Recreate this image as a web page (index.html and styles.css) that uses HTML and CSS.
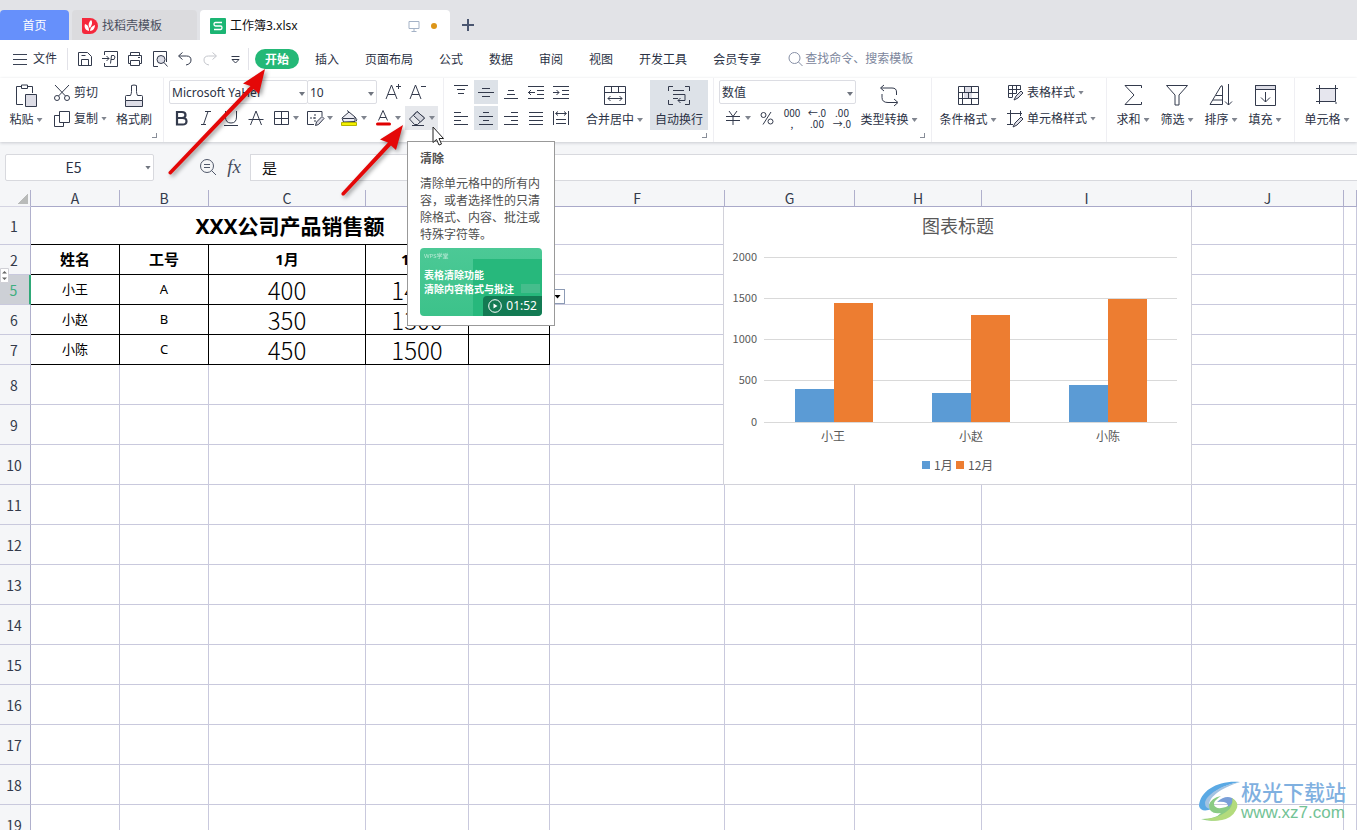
FILE: index.html
```html
<!DOCTYPE html>
<html lang="zh-CN">
<head>
<meta charset="utf-8">
<title>工作簿3.xlsx</title>
<link rel="stylesheet" href="styles.css">
</head>
<body>
<header class="tabbar">
  <button class="tab home">首页</button>
  <button class="tab docer"><svg class="logo" viewBox="0 0 16 16"><path d="M0 0h8a8 8 0 0 1 8 8 8 8 0 0 1-8 8H3a3 3 0 0 1-3-3z" fill="#f5283c"/><path d="M7 13C3 12 2 9 3 6c3 1 4 3 4 7zM7 9c-1-3 0-5 2-7 2 2 1 5-1 8zM8 13c0-3 2-5 5-6 0 3-2 6-5 6z" fill="#fff"/></svg>找稻壳模板</button>
  <div class="tab active"><svg class="logo" viewBox="0 0 16 16"><rect width="16" height="16" rx="1" fill="#1bb573"/><path d="M12 4.500H5.500q-1.500 0-1.500 1.700T5.500 8h5q1.500 0 1.500 1.700T10.500 11.500H4" fill="none" stroke="#fff" stroke-width="1.300"/></svg><span class="name">工作簿3.xlsx</span>
    <svg class="screen" viewBox="0 0 12 12" fill="none" stroke="#a4b2c6"><path d="M1 1.500h10v7H1zM6 8.500v3M3.500 11.500h5"/></svg><i class="dot"></i></div>
  <button class="plus" aria-label="新建"><svg width="12" height="12" stroke="#4a5670" stroke-width="2"><path d="M6 0v12M0 6h12"/></svg></button>
</header>

<nav class="menubar">
  <button class="file"><svg width="16" height="12" stroke="#3a4254"><path d="M1 1.500h14M1 6.500h14M1 11.500h14"/></svg>文件</button>
  <div class="quick">
    <button aria-label="保存"><svg class="ic16" viewBox="0 0 16 16"><path d="M1.500 1.500h9l4 4v9h-13zM4.500 14.500v-6h7v6M4.500 4.500h4"/></svg></button>
    <button aria-label="输出为PDF"><svg class="ic16" viewBox="0 0 16 16"><path d="M2.500 4V.5h13v15h-13V12M0 7.500h7M4.500 5l2.500 2.500L4.500 10M8.500 12.500l1-8h2.500q2 1 0 4H9"/></svg></button>
    <button aria-label="打印"><svg class="ic16" viewBox="0 0 16 16"><path d="M3.500 4.500v-3h9v3M3.500 12.500h-2v-8h13v8h-2M3.500 9.500h9v5h-9zM11 6.500h2"/></svg></button>
    <button aria-label="打印预览"><svg class="ic16" viewBox="0 0 16 16"><path d="M6 15.500H1.500V.5h13V11"/><circle cx="9" cy="8.500" r="4" fill="#dcdde6"/><path d="M12 11.500l3.500 4"/></svg></button>
    <button aria-label="撤销"><svg class="ic16" viewBox="0 0 16 16"><path d="M5.500 1.500l-4 3.500 4 3.500M2 5h7.500q4.500 0 4.500 4t-5 5"/></svg></button>
    <button aria-label="恢复"><svg class="ic16 pale" viewBox="0 0 16 16"><path d="M10.500 1.500l4 3.500-4 3.500M14 5H6.500Q2 5 2 9t5 5"/></svg></button>
    <button aria-label="更多"><svg class="ic16" viewBox="0 0 16 16"><path d="M4.500 5.500h8M5 8.500h7l-3.500 3.500z"/></svg></button>
  </div>
  <div class="menus">
    <button class="on">开始</button><button>插入</button><button>页面布局</button><button>公式</button><button>数据</button><button>审阅</button><button>视图</button><button>开发工具</button><button>会员专享</button>
  </div>
  <label class="search"><svg class="ic16 soft" viewBox="0 0 16 16"><circle cx="6.500" cy="7" r="5.500"/><path d="M10.500 11l4 4"/></svg><input type="text" placeholder="查找命令、搜索模板" aria-label="查找命令"></label>
</nav>

<section class="ribbon">
  <div class="group clip">
    <button class="big w44"><svg class="ic" viewBox="0 0 24 24"><path d="M9 20.500H2.500v-18H7M14 2.500h4.500V9M7.500 1h6v3.500h-6z"/><path d="M11.500 10.500h11v12h-11z" fill="#dddde6"/></svg><span>粘贴<i class="caret"></i></span></button>
    <div class="stack ml2">
      <button class="item"><svg class="ic" viewBox="0 0 24 24"><circle cx="7" cy="17" r="2.500"/><circle cx="17" cy="17" r="2.500"/><path d="M5 4l10.500 11M19 4L8.500 15"/></svg>剪切</button>
      <button class="item"><svg class="ic" viewBox="0 0 24 24"><path d="M9.500 4.500h10v11h-10z"/><path d="M9 8.500H4.500v11h9V16"/></svg>复制<i class="caret"></i></button>
    </div>
    <button class="big w44 ml5"><svg class="ic" viewBox="0 0 24 24"><path d="M3.500 16.500h17v6h-17z" fill="#dddde6"/><path d="M3.500 16.500v-4q0-1 1-1h4q1-2 1-4V1.500q2.500-1 5 0v6q0 2 1 4h4q1 0 1 1v4"/></svg><span>格式刷</span></button>
    <i class="corner"></i>
  </div>
  <div class="group font">
    <div class="stack">
      <div class="line">
        <div class="pick w138"><select aria-label="字体"><option>Microsoft YaHei</option></select></div><div class="pick w70 joined"><select aria-label="字号"><option>10</option></select></div>
        <button class="sq ml4" aria-label="增大字号"><svg class="ic" viewBox="0 0 24 24"><path d="M5 19l5.500-14L16 19M7 14.500h7M15 6.500h5M17.500 4v5"/></svg></button><button class="sq ml1" aria-label="减小字号"><svg class="ic" viewBox="0 0 24 24"><path d="M4 19L9.500 5 15 19M6 14.500h7M15 6.500h5"/></svg></button>
      </div>
      <div class="line gap1">
        <button class="sq" aria-label="加粗"><svg class="ic" viewBox="0 0 24 24"><path d="M8 6h5q3.500 0 3.500 3t-3.500 3H8zM8 12h5.500q4 0 4 3.300t-4 3.200H8z" stroke-width="2.200"/></svg></button>
        <button class="sq" aria-label="倾斜"><svg class="ic" viewBox="0 0 24 24"><path d="M11 5.500h6M7 18.500h5M14 5.500l-4.500 13"/></svg></button>
        <button class="sq" aria-label="下划线"><svg class="ic" viewBox="0 0 24 24"><path d="M6.500 5v6q0 6 5.500 6t5.500-6V5M5 19.500h14"/></svg></button>
        <button class="sq" aria-label="删除线"><svg class="ic" viewBox="0 0 24 24"><path d="M6.500 19L12 5l5.500 14M4.500 13.500h15"/></svg></button>
        <button class="sp" aria-label="边框"><svg class="ic" viewBox="0 0 24 24"><path d="M5.500 5.500h14v13h-14zM12.500 5.500v13M5.500 12.500h14"/></svg><i class="caret"></i></button>
        <button class="sp" aria-label="绘图边框"><svg class="ic" viewBox="0 0 24 24"><path d="M19 10V5.500H4.500v13H11"/><path d="M7 12h6M12 8v8" stroke-dasharray="2 1"/><path d="M12.500 19.500l1-3.500L19 10.500l2 2-5.500 6z" fill="#dddde6"/></svg><i class="caret"></i></button>
        <button class="sp" aria-label="填充颜色"><svg class="ic" viewBox="0 0 24 24"><path d="M6.500 16L5 12l7-6 6 5v4.500zM10 4.500l2 1.500M6 12.500h11" fill="#ececf2"/><path d="M18 11q3 3 1 4.500"/><path d="M4.500 16.500h15v3h-15z" fill="#f4f000" stroke="#b5b400"/></svg><i class="caret"></i></button>
        <button class="sp" aria-label="字体颜色"><svg class="ic" viewBox="0 0 24 24"><path d="M7.500 14.500l4.500-10 4.500 10M9 11.500h6"/><path d="M6.500 18h12" stroke="#e00000" stroke-width="3" stroke-linecap="round"/></svg><i class="caret"></i></button>
        <button class="sp hover" aria-label="清除"><svg class="ic" viewBox="0 0 24 24"><path d="M4.500 13L12 5.500l7.500 6.500-7 6.500H9.500z"/><path d="M8.500 9.500l7 6.500 4-4-7.500-6.500z" fill="#d4d6de"/><path d="M7 19.500h12"/></svg><i class="caret"></i></button>
      </div>
    </div>
  </div>
  <div class="group align">
    <div class="stack">
      <div class="line gap1">
        <button class="sq" aria-label="顶端对齐"><svg class="ic" viewBox="0 0 24 24"><path d="M5 5.500h14M8 9.500h8M9 13.500h6"/></svg></button>
        <button class="sq on" aria-label="垂直居中"><svg class="ic" viewBox="0 0 24 24"><path d="M8 8.500h8M4 12.500h16M8 16.500h8"/></svg></button>
        <button class="sq" aria-label="底端对齐"><svg class="ic" viewBox="0 0 24 24"><path d="M9 10.500h6M8 14.500h8M5 18.500h14"/></svg></button>
        <button class="sq" aria-label="减少缩进"><svg class="ic" viewBox="0 0 24 24"><path d="M4 6.500h16M13 10.500h7M13 14.500h7M4 18.500h16M11 12.500H4M7 10l-2.500 2.500L7 15"/></svg></button>
        <button class="sq" aria-label="增加缩进"><svg class="ic" viewBox="0 0 24 24"><path d="M4 6.500h16M13 10.500h7M13 14.500h7M4 18.500h16M4 12.500h6M7.500 10l2.500 2.500L7.500 15"/></svg></button>
      </div>
      <div class="line gap1">
        <button class="sq" aria-label="左对齐"><svg class="ic" viewBox="0 0 24 24"><path d="M5 6.500h7M5 10.500h14M5 14.500h7M5 18.500h14"/></svg></button>
        <button class="sq on" aria-label="水平居中"><svg class="ic" viewBox="0 0 24 24"><path d="M9 6.500h6M5 10.500h14M9 14.500h6M5 18.500h14"/></svg></button>
        <button class="sq" aria-label="右对齐"><svg class="ic" viewBox="0 0 24 24"><path d="M12 6.500h7M5 10.500h14M12 14.500h7M5 18.500h14"/></svg></button>
        <button class="sq" aria-label="两端对齐"><svg class="ic" viewBox="0 0 24 24"><path d="M5 6.500h14M5 10.500h14M5 14.500h14M5 18.500h14"/></svg></button>
        <button class="sq" aria-label="分散对齐"><svg class="ic" viewBox="0 0 24 24"><path d="M4.500 5v14M19.500 5v14M7 7.500h10M9 5.500l-2.500 2L9 9.500M15 5.500l2.500 2-2.500 2M7 13.500h10M7 17.500h10"/></svg></button>
      </div>
    </div>
    <button class="big w65 ml9"><svg class="ic" viewBox="0 0 24 24"><path d="M1.500 2.500h21v18h-21zM1.500 8.500h21M8.500 2.500v6M15.500 2.500v6M5 14.500h14M7.500 12L5 14.500 7.500 17M16.500 12l2.500 2.500-2.500 2.500"/></svg><span>合并居中<i class="caret"></i></span></button>
    <button class="big w58 ml3 on"><svg class="ic" viewBox="0 0 24 24"><path d="M1.500 7V2.500H6M18 2.500h4.500V7M1.500 16v4.500H6M18 20.500h4.500V16M6 6.500h11M6 10.500h12M6 14.500h5M18 10.500v6h-7M13.500 14L11 16.500l2.500 2.500"/></svg><span>自动换行</span></button>
    <i class="corner"></i>
  </div>
  <div class="group number">
    <div class="stack">
      <div class="line"><div class="pick w137"><select aria-label="数字格式"><option>数值</option></select></div></div>
      <div class="line gap1 pl2">
        <button class="sp" aria-label="货币"><svg class="ic" viewBox="0 0 24 24"><path d="M8 5l4 5.500L16 5M5 10.500h14M5 14.500h14M12 10.500V19"/></svg><i class="caret"></i></button>
        <button class="sq" aria-label="百分比"><svg class="ic" viewBox="0 0 24 24"><circle cx="8.500" cy="9" r="2.500"/><circle cx="15.500" cy="15.500" r="2.500"/><path d="M16 6L8 18.500"/></svg></button>
        <button class="sq digits"><span>000</span><span>,</span></button>
        <button class="sq digits"><span>←.0</span><span>.00</span></button>
        <button class="sq digits"><span>.00</span><span>→.0</span></button>
      </div>
    </div>
    <button class="big w66"><svg class="ic" viewBox="0 0 24 24"><path d="M7 1L3.500 4 7 7M4 4h11q4.500 0 4.500 4v3M17 15l4 3.500-4 3.500M20 18.500h-9q-6 0-6-5V10"/></svg><span>类型转换<i class="caret"></i></span></button>
    <i class="corner"></i>
  </div>
  <div class="group styles">
    <button class="big w66"><svg class="ic" viewBox="0 0 24 24"><path d="M8 3h8v11H8z" fill="#dddde6" stroke="none"/><path d="M2.500 2.500h20v18h-20zM2.500 8.500h20M2.500 14.500h20M8.500 2.500v6M15.500 2.500v6M6.500 8.500v12M12.500 8.500v6M15.500 14.500v6"/></svg><span>条件格式<i class="caret"></i></span></button>
    <div class="stack ml2">
      <button class="item"><svg class="ic" viewBox="0 0 24 24"><path d="M9 16.500H5.500v-12h12V9M5.500 8.500h12M5.500 12.500h8M9.500 4.500v12M13.500 4.500v8"/><path d="M11 19l2-4 5-5 2 2-5 5z" fill="#dddde6"/></svg>表格样式<i class="caret"></i></button>
      <button class="item"><svg class="ic" viewBox="0 0 24 24"><path d="M7.500 3v14M4 6.500h15M17.500 4v5M4 17.500h6"/><path d="M10 20l2-4 6-6 2 2-6 6z" fill="#dddde6"/></svg>单元格样式<i class="caret"></i></button>
    </div>
  </div>
  <div class="group edit">
    <button class="big w44"><svg class="ic" viewBox="0 0 24 24"><path d="M20.500 4V1.500H4L13 11l-9 9.500h16.500V18"/></svg><span>求和<i class="caret"></i></span></button>
    <button class="big w44"><svg class="ic" viewBox="0 0 24 24"><path d="M1.500 1.500h21L14 11v10h-4V11z"/></svg><span>筛选<i class="caret"></i></span></button>
    <button class="big w44"><svg class="ic" viewBox="0 0 24 24"><path d="M1 20.500L12 2q1.500-1 1.500 1v17.500zM7 11.500h6.500M4 16h9.500M19.500 0v21M16 17.500l3.500 3.500 3.500-3.500"/></svg><span>排序<i class="caret"></i></span></button>
    <button class="big w44"><svg class="ic" viewBox="0 0 24 24"><path d="M2.500 1.500h20v4h-20z" fill="#dddde6"/><path d="M2.500 1.500h20v20h-20zM12.500 8v10M8 13.500l4.500 4.500 4.500-4.500"/></svg><span>填充<i class="caret"></i></span></button>
  </div>
  <div class="group cells">
    <button class="big w52"><svg class="ic" viewBox="0 0 24 24"><path d="M4.500 4.500h16v13h-16z" fill="#e6e6ee"/><path d="M4.500 1v19M20.500 1v15M1 4.500h22M1 17.500h17M21 18v2"/></svg><span>单元格<i class="caret"></i></span></button>
  </div>
</section>

<section class="formula">
  <div class="pick namebox"><input type="text" value="E5" aria-label="名称框"></div>
  <button class="fbtn" aria-label="查找"><svg viewBox="0 0 18 18" width="18" height="18" fill="none" stroke="#50586a"><circle cx="8" cy="8" r="6.500"/><path d="M12.500 12.500l4.500 4.500M5 6.500h6M5 9.500h6"/></svg></button>
  <button class="fbtn fx">fx</button>
  <input class="fx-input" type="text" value="是" aria-label="编辑栏">
</section>

<main class="sheet">
  <table class="grid">
    <colgroup><col class="c0"><col class="ca"><col class="ca"><col class="cc"><col class="cd"><col class="ce"><col class="cf"><col class="cg"><col class="ch"><col class="ci"><col class="cj"><col></colgroup>
    <thead><tr><th class="all"></th><th>A</th><th>B</th><th>C</th><th></th><th></th><th>F</th><th>G</th><th>H</th><th>I</th><th>J</th><th></th></tr></thead>
    <tbody>
      <tr class="r1"><th>1</th><td class="title" colspan="5">XXX公司产品销售额</td><td></td><td></td><td></td><td></td><td></td><td></td></tr>
      <tr class="r2 data"><th>2</th><td>姓名</td><td>工号</td><td>1月</td><td>12月</td><td></td><td></td><td></td><td></td><td></td><td></td><td></td></tr>
      <tr class="data now"><th>5</th><td>小王</td><td>A</td><td class="num">400</td><td class="num">1440</td><td></td><td></td><td></td><td></td><td></td><td></td><td></td></tr>
      <tr class="data"><th>6</th><td>小赵</td><td>B</td><td class="num">350</td><td class="num">1300</td><td></td><td></td><td></td><td></td><td></td><td></td><td></td></tr>
      <tr class="data"><th>7</th><td>小陈</td><td>C</td><td class="num">450</td><td class="num">1500</td><td></td><td></td><td></td><td></td><td></td><td></td><td></td></tr>
      <tr><th>8</th><td></td><td></td><td></td><td></td><td></td><td></td><td></td><td></td><td></td><td></td><td></td></tr>
      <tr><th>9</th><td></td><td></td><td></td><td></td><td></td><td></td><td></td><td></td><td></td><td></td><td></td></tr>
      <tr><th>10</th><td></td><td></td><td></td><td></td><td></td><td></td><td></td><td></td><td></td><td></td><td></td></tr>
      <tr><th>11</th><td></td><td></td><td></td><td></td><td></td><td></td><td></td><td></td><td></td><td></td><td></td></tr>
      <tr><th>12</th><td></td><td></td><td></td><td></td><td></td><td></td><td></td><td></td><td></td><td></td><td></td></tr>
      <tr><th>13</th><td></td><td></td><td></td><td></td><td></td><td></td><td></td><td></td><td></td><td></td><td></td></tr>
      <tr><th>14</th><td></td><td></td><td></td><td></td><td></td><td></td><td></td><td></td><td></td><td></td><td></td></tr>
      <tr><th>15</th><td></td><td></td><td></td><td></td><td></td><td></td><td></td><td></td><td></td><td></td><td></td></tr>
      <tr><th>16</th><td></td><td></td><td></td><td></td><td></td><td></td><td></td><td></td><td></td><td></td><td></td></tr>
      <tr><th>17</th><td></td><td></td><td></td><td></td><td></td><td></td><td></td><td></td><td></td><td></td><td></td></tr>
      <tr><th>18</th><td></td><td></td><td></td><td></td><td></td><td></td><td></td><td></td><td></td><td></td><td></td></tr>
      <tr><th>19</th><td></td><td></td><td></td><td></td><td></td><td></td><td></td><td></td><td></td><td></td><td></td></tr>
    </tbody>
  </table>

  <svg class="chart" width="469" height="279" viewBox="0 0 469 279">
    <path d="M.5 0v277.500h468V0" fill="#fff" stroke="#d2d2da"/>
    <text class="ct" x="235" y="26">图表标题</text>
    <path d="M41 50.500h413M41 91.500h413M41 132.500h413M41 173.500h413M41 215.500h413" stroke="#d9d9d9"/>
    <g fill="#5b9bd5"><path d="M72 182h39v33H72zM209 186h39v29h-39zM346 178h39v37h-39z"/><path d="M199 254h8v8h-8z"/></g>
    <g fill="#ed7d31"><path d="M111 96h39v119h-39zM248 108h39v107h-39zM385 92h39v123h-39z"/><path d="M233 254h8v8h-8z"/></g>
    <g class="ay"><text x="34" y="54">2000</text><text x="34" y="95">1500</text><text x="34" y="136">1000</text><text x="34" y="177">500</text><text x="34" y="219">0</text></g>
    <g class="ax"><text x="110" y="234">小王</text><text x="248" y="234">小赵</text><text x="385" y="234">小陈</text></g>
    <g class="lg"><text x="211" y="263">1月</text><text x="245" y="263">12月</text></g>
  </svg>
  <button class="drop" aria-label="下拉列表"></button>
  <svg class="unhide" width="9" height="15" viewBox="0 0 9 15"><path d="M.5.5h8v14h-8z" fill="#fff" stroke="#d0d0d6"/><path d="M2 5.500h5L4.500 3zM2 9.500h5L4.500 12z" fill="#666"/></svg>
</main>

<aside class="tip" role="tooltip">
  <h4>清除</h4>
  <p>清除单元格中的所有内容，或者选择性的只清除格式、内容、批注或特殊字符等。</p>
  <div class="video">
    <small>WPS学堂</small>
    <b>表格清除功能<br>清除内容格式与批注</b>
    <span class="time"><svg width="14" height="14" viewBox="0 0 14 14"><circle cx="7" cy="7" r="6.300" fill="none" stroke="#fff"/><path d="M5.500 4.500v5l4-2.500z" fill="#fff"/></svg>01:52</span>
  </div>
</aside>

<svg class="overlay" width="460" height="210" viewBox="0 0 460 210">
  <g class="arrows" fill="#e40808">
    <path d="M265 69L259 94L253.500 89L171 174.500Q168 175 168.500 172L250.500 86L243 83.500Z"/>
    <path d="M403 125L396 150L391 145.500L344 195.500Q341 196 341.500 193L388 142.500L380 139.500Z"/>
  </g>
  <path d="M433 127v15.500l3.500-3 2.500 5.500 2.500-1-2.500-5.500h4.500z" fill="#fff" stroke="#222"/>
</svg>

<div class="mark">
  <svg width="44" height="42" viewBox="0 0 44 42"><path d="M2 26C3 10 22 0 43 2 26 5 14 12 11 21q-1 6 4 8Q4 33 2 26z" fill="#5aa9e4"/><path d="M43 2C24 5 9 15 8 23q0 6 7 6-5-4-1-10Q21 9 43 2z" fill="#a3c3e2"/><path d="M12 25q2-7 12-9-8 5-7 9 2 5 12 2 7-3 6-9 7 4 4 11-4 8-16 11-11 2-19-1 15 0 20-6-12 2-12-8z" fill="#8acb84"/><path d="M7 39q12 0 22-7 8-5 6-14 8 5 4 12-4 8-14 10-10 2-18-1z" fill="#b3db7c"/><path d="M20 22q8-7 15-4 2 5-4 9 1-6-11-5z" fill="#7a9fd8"/></svg>
  <div><b>极光下载站</b><span>www.xz7.com</span></div>
</div>
</body>
</html>
```
FILE: styles.css
```css
* { box-sizing: border-box; }
body {
  margin: 0;
  height: 100vh;
  overflow: hidden;
  position: relative;
  display: flex;
  flex-direction: column;
  background: #fff;
  color: #2b3245;
  font: 12px/18px "Noto Sans", "Noto Sans CJK SC", sans-serif;
}
button, input, select { font: inherit; color: inherit; border: 0; padding: 0; margin: 0; background: none; }
button { display: flex; align-items: center; justify-content: center; white-space: nowrap; }
svg { flex: none; display: block; }

/* tabs */
.tabbar { display: flex; height: 40px; padding-top: 10px; background: #e2e3e7; flex: none; }
.tab { display: flex; align-items: center; height: 30px; padding-top: 2px; border-radius: 4px 4px 0 0; }
.home { width: 69px; background: #6690fb; color: #fff; margin-right: 3px; }
.docer { width: 125px; padding-left: 10px; justify-content: flex-start; background: #dbdbde; margin-right: 3px; color: #4a4f5e; }
.active { width: 250px; padding: 2px 13px 0 10px; background: #fff; color: #111; }
.logo { width: 16px; height: 16px; margin-right: 4px; }
.name { flex: 1; }
.screen { width: 12px; height: 12px; margin-right: 11px; }
.dot { width: 6px; height: 6px; border-radius: 3px; background: #dc9518; }
.plus { width: 36px; height: 30px; }

/* menu */
.menubar { display: flex; align-items: center; height: 38px; flex: none; background: #fff; }
.file { width: 68px; height: 22px; padding-left: 12px; gap: 5px; justify-content: flex-start; border-right: 1px solid #e2e2e8; }
.quick { display: flex; width: 181px; height: 22px; padding-left: 4px; border-right: 1px solid #e2e2e8; }
.quick button { width: 25px; }
.ic16, .ic { fill: none; stroke: #333a4c; stroke-width: 1; }
.ic16 { width: 16px; height: 16px; }
.ic { width: 24px; height: 24px; }
.pale { stroke: #c4c6cc; }
.soft { stroke: #8790a6; }
.menus { display: flex; padding-left: 6px; }
.menus button { height: 20px; padding: 2px 13px 0; }
.menus .on { padding: 2px 10px 0; margin-right: 3px; border-radius: 10px; background: #24b877; color: #fff; font-weight: 600; }
.search { display: flex; align-items: center; margin-left: 14px; }
.search input { width: 130px; padding-left: 1px; outline: 0; }
.search input::placeholder { color: #7c869c; opacity: 1; }

/* ribbon */
.ribbon { display: flex; height: 64px; flex: none; background: #fff; box-shadow: 0 1px 3px #c8cad0; position: relative; overflow-x: clip; }
.group { position: relative; display: flex; align-items: flex-start; flex: none; padding: 2px 0 0 5px; border-right: 1px solid #efeff3; }
.clip { width: 164px; padding-left: 4px; }
.font { width: 280px; }
.align { width: 270px; }
.number { width: 218px; }
.styles { width: 175px; padding-left: 3px; }
.edit { width: 188px; padding-left: 4px; }
.cells { flex: 1; padding-left: 6px; border: 0; }
.stack { display: flex; flex-direction: column; gap: 2px; }
.line { display: flex; height: 24px; }
.gap1 { gap: 1px; }
.pl2 { padding-left: 2px; }
.big { flex-direction: column; height: 50px; flex: none; justify-content: flex-start; padding-top: 4px; gap: 3px; }
.big span { display: flex; align-items: center; height: 18px; }
.item { height: 24px; padding-top: 1px; justify-content: flex-start; }
.sq { width: 24px; height: 24px; }
.sp { width: 33px; height: 24px; justify-content: flex-start; }
.on { background: #dde2e8; }
.hover { background: #e6e8ec; }
.caret { flex: none; width: 6px; height: 4px; margin-left: 3px; background: #80858f; clip-path: polygon(0 0, 100% 0, 50% 100%); }
.sp .caret { margin-left: 0; }
.corner { position: absolute; right: 6px; bottom: 4px; width: 5px; height: 5px; border: solid #888d98; border-width: 0 1px 1px 0; }
.w44 { width: 44px; } .w52 { width: 52px; } .w58 { width: 58px; } .w65 { width: 65px; } .w66 { width: 66px; }
.w70 { width: 70px; } .w137 { width: 137px; } .w138 { width: 139px; }
.ml1 { margin-left: 1px; } .ml2 { margin-left: 2px; } .ml3 { margin-left: 3px; } .ml4 { margin-left: 4px; } .ml5 { margin-left: 5px; } .ml9 { margin-left: 9px; }
.joined { margin-left: -1px; }
.pick { position: relative; display: flex; border: 1px solid #dcdde3; border-radius: 2px; background: #fff; }
.pick select { appearance: none; width: 100%; padding: 1px 0 0 2px; outline: 0; }
.pick::after { content: ""; position: absolute; right: 2px; top: 11px; width: 6px; height: 4px; background: #70757f; clip-path: polygon(0 0, 100% 0, 50% 100%); }
.digits { flex-direction: column; font: 10px/11px "Noto Sans CJK SC", sans-serif; }

/* formula bar */
.formula { display: flex; align-items: center; height: 48px; flex: none; padding: 2px 0 0 5px; background: #f5f6f8; }
.pick.namebox { width: 149px; height: 27px; border-color: #d8d9de; margin-right: 41px; }
.namebox input { width: 100%; padding-right: 12px; text-align: center; font: 14px/20px "Noto Sans CJK SC", sans-serif; }
.fbtn { width: 26px; height: 26px; }
.fx { font: italic 19px/20px "Liberation Serif", serif; color: #454c5c; }
.fx-input { flex: 1; min-width: 0; height: 27px; margin-left: 3px; padding-left: 11px; border: 1px solid #d8d9de; border-right: 0; background: #fff; font-size: 15px; color: #111; }

/* sheet */
.sheet { position: relative; flex: 1; min-height: 0; overflow: hidden; }
.grid { width: 100%; table-layout: fixed; border-collapse: separate; border-spacing: 0; color: #000; }
.c0 { width: 31px; } .ca { width: 89px; } .cc { width: 157px; } .cd { width: 103px; } .ce { width: 81px; } .cf { width: 175px; }
.cg { width: 130px; } .ch { width: 127px; } .ci { width: 210px; } .cj { width: 152px; }
th, td { padding: 0; height: 40px; border: solid #c9c9dd; border-width: 0 1px 1px 0; text-align: center; vertical-align: middle; }
th { background: #f5f6f8; color: #333a4a; font: 14px/16px "Noto Sans CJK SC", sans-serif; border-right-color: #b0b0cc; }
tbody th { padding-right: 2px; }
thead th { height: 17px; line-height: 16px; border-bottom-color: #a9a9c9; }
.all { background: linear-gradient(135deg, transparent 50%, #b9bbba 50%) no-repeat 17px 3px / 11px 11px #f5f6f8; border-bottom-color: #d4d4e2; }
.r1 > * { height: 38px; }
.data > * { height: 30px; }
td.title { font-size: 21px; line-height: 30px; font-weight: 700; border-color: #000; }
.data td { font-size: 13px; line-height: 18px; padding-bottom: 2px; }
.data td:nth-child(-n+6) { border-color: #000; }
.data.r2 td { font-size: 15px; font-weight: 700; }
.data td.num { font: 300 24px/26px "Noto Sans CJK SC", sans-serif; padding: 0; }
.now th { background: #cdd0d6; color: #3fae80; border-right: 2px solid #2fa878; }
.chart { position: absolute; left: 723px; top: 17px; font-family: "Noto Sans CJK SC", sans-serif; fill: #595959; }
.ct { font-size: 18px; text-anchor: middle; }
.ay { font-size: 11px; text-anchor: end; }
.ax { font-size: 12px; text-anchor: middle; }
.lg { font-size: 12px; }
.drop { position: absolute; left: 550px; top: 99px; width: 15px; height: 15px; background: #fff; border: 1px solid #8d9bb5; }
.drop::after { content: ""; width: 7px; height: 4px; background: #000; clip-path: polygon(0 0, 100% 0, 50% 100%); }
.unhide { position: absolute; left: 0; top: 78px; }

/* tooltip */
.tip { position: absolute; left: 407px; top: 141px; width: 148px; height: 185px; padding: 8px 12px; border: 1px solid #999; background: #fff; color: #505050; }
.tip h4 { margin: 0 0 7px; font-size: 12px; line-height: 18px; font-weight: 600; }
.tip p { margin: 0 0 5px; line-height: 17px; width: 122px; }
.video { position: relative; height: 68px; padding: 2px 4px; border-radius: 4px; overflow: hidden; color: #fff; background: linear-gradient(#45bd8c, #45bd8c) no-repeat 101px 36px / 19px 9px, linear-gradient(#27b87c, #27b87c) no-repeat 53px 11px / 80px 60px, linear-gradient(#4cc996, #3cc28a); }
.video small { display: block; font-size: 6px; line-height: 12px; opacity: .6; }
.video b { display: block; margin-top: 6px; font-size: 10px; line-height: 14px; white-space: nowrap; }
.time { position: absolute; right: 0; bottom: 0; display: flex; align-items: center; gap: 4px; height: 20px; padding: 0 5px; border-radius: 4px 0 4px 0; background: #137a53; }

.overlay { position: absolute; left: 0; top: 0; pointer-events: none; }
.arrows { filter: drop-shadow(2px 2px 2px #0006); }

.mark { position: absolute; right: 11px; bottom: 8px; display: flex; align-items: center; }
.mark b { display: block; font-size: 21px; line-height: 24px; font-weight: 500; color: #7fb0e0; }
.mark span { display: block; font: 17px/18px "Liberation Sans", sans-serif; color: #72c295; }
```
